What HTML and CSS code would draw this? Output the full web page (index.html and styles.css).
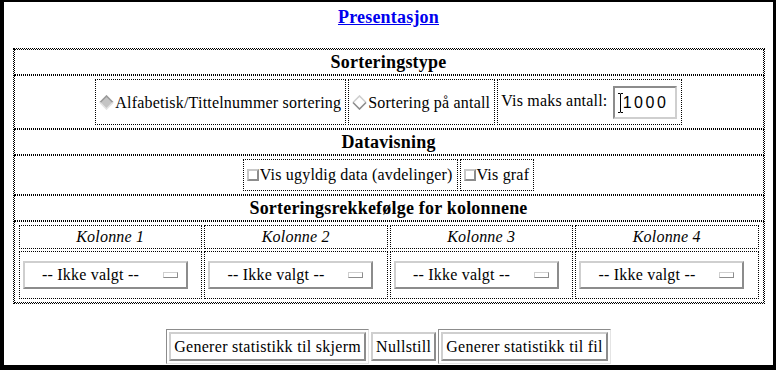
FILE: index.html
```html
<!DOCTYPE html>
<html lang="no">
<head>
  <meta charset="UTF-8">
  <title>Presentasjon</title>
  <link rel="stylesheet" href="styles.css">
</head>
<body>

  <div class="page">
    <h1 class="title"><a href="#">Presentasjon</a></h1>

    <table class="outer">
      <!-- SORTERINGSTYPE -->
      <tr><th>Sorteringstype</th></tr>
      <tr>
        <td>
          <table class="inner sort">
            <tr>
              <td>
                <svg class="radio" width="15" height="15" viewBox="0 0 15 15">
                  <polygon points="7.5,1 14,7.5 7.5,14 1,7.5" fill="#c4c4c4"/>
                  <polyline points="1,7.5 7.5,1 14,7.5" fill="none" stroke="#9a9a9a" stroke-width="1.6"/>
                  <polyline points="14,7.5 7.5,14 1,7.5" fill="none" stroke="#e2e2e2" stroke-width="1.6"/>
                </svg>Alfabetisk/Tittelnummer sortering
              </td>
              <td>
                <svg class="radio" width="15" height="15" viewBox="0 0 15 15">
                  <polygon points="7.5,1 14,7.5 7.5,14 1,7.5" fill="#fff"/>
                  <polyline points="1,7.5 7.5,1 14,7.5" fill="none" stroke="#cfcfcf" stroke-width="1.6"/>
                  <polyline points="14,7.5 7.5,14 1,7.5" fill="none" stroke="#8c8c8c" stroke-width="1.6"/>
                </svg>Sortering på antall
              </td>
              <td class="maks">
                Vis maks antall:
                <span class="num">
                  <svg class="caret" width="5" height="20" viewBox="0 0 5 20">
                    <path d="M0 0.5h2M3 0.5h2M2.5 0.5v19M0 19.5h2M3 19.5h2" stroke="#000" stroke-width="1" fill="none"/>
                  </svg>1000
                </span>
              </td>
            </tr>
          </table>
        </td>
      </tr>

      <!-- DATAVISNING -->
      <tr><th>Datavisning</th></tr>
      <tr>
        <td>
          <table class="inner data">
            <tr>
              <td><span class="check"></span>Vis ugyldig data (avdelinger)</td>
              <td><span class="check"></span>Vis graf</td>
            </tr>
          </table>
        </td>
      </tr>

      <!-- KOLONNER -->
      <tr><th>Sorteringsrekkefølge for kolonnene</th></tr>
      <tr>
        <td class="colrow">
          <table class="inner cols">
            <tr>
              <td class="colname">Kolonne 1</td>
              <td class="colname">Kolonne 2</td>
              <td class="colname">Kolonne 3</td>
              <td class="colname">Kolonne 4</td>
            </tr>
            <tr>
              <td class="colsel"><div class="select"><span class="label">-- Ikke valgt --</span><span class="indicator"></span></div></td>
              <td class="colsel"><div class="select"><span class="label">-- Ikke valgt --</span><span class="indicator"></span></div></td>
              <td class="colsel"><div class="select"><span class="label">-- Ikke valgt --</span><span class="indicator"></span></div></td>
              <td class="colsel"><div class="select"><span class="label">-- Ikke valgt --</span><span class="indicator"></span></div></td>
            </tr>
          </table>
        </td>
      </tr>
    </table>

    <div class="actions">
      <span class="default"><button>Generer statistikk til skjerm</button></span>
      <button>Nullstill</button>
      <span class="default"><button>Generer statistikk til fil</button></span>
    </div>
  </div>

</body>
</html>
```

FILE: styles.css
```css
html, body {
  background-color: #000;
  margin: 0;
}

body {
  font-family: "Liberation Serif", "Times New Roman", serif;
  font-size: 16px;
  letter-spacing: 0.2px;
}

.page {
  background-color: #fff;
  margin: 2px 3px 0 4px;
  height: 363px;
  overflow: hidden;
}

.title {
  margin: 0;
  padding-top: 5px;
  height: 41px;
  font-size: 18px;
  line-height: 21px;
  text-align: center;
  letter-spacing: 0.2px;
}

.title a {
  color: #0000ee;
}

/* tabeller */
table {
  border-collapse: separate;
}

.outer {
  width: 752px;
  margin: 0 auto;
  border: 1px dotted #000;
  border-spacing: 0;
}

.outer > tbody > tr > th,
.outer > tbody > tr > td {
  border: 1px dotted #000;
  padding: 1px;
}

.outer > tbody > tr > th {
  font-size: 18px;
  line-height: 20px;
  padding: 2px;
  letter-spacing: 0.2px;
}

.outer > tbody > tr > td.colrow {
  padding: 1px 2px;
}

.inner {
  margin: 0 auto;
  border-spacing: 2px;
}

.inner td {
  border: 1px dotted #000;
  white-space: nowrap;
  vertical-align: middle;
}

.sort td {
  padding: 6px 4px 5px 3px;
  height: 33px;
}

.data td {
  padding: 5px 4px 5px 3px;
  line-height: 20px;
}

.cols {
  width: 100%;
}

.colname {
  width: 25%;
  text-align: center;
  font-style: italic;
  line-height: 20px;
  padding: 1px;
}

.colsel {
  padding: 9px 3px;
}

/* kontroller */
.radio {
  vertical-align: -2px;
  margin-right: 1px;
}

.check {
  display: inline-block;
  width: 12px;
  height: 12px;
  box-sizing: border-box;
  border: 2px solid;
  border-color: #c8c8c8 #8c8c8c #8c8c8c #c8c8c8;
  background-color: #fff;
  vertical-align: -1px;
  margin-right: 1px;
}

.num {
  display: inline-flex;
  align-items: center;
  width: 64px;
  height: 33px;
  box-sizing: border-box;
  border: 2px solid;
  border-color: #8c8c8c #cfcfcf #cfcfcf #8c8c8c;
  padding-left: 3px;
  margin-left: 1px;
  vertical-align: middle;
  font-family: "Liberation Sans", Arial, sans-serif;
  font-size: 16px;
  letter-spacing: 2.5px;
}

.select {
  display: flex;
  align-items: center;
  width: 165px;
  height: 28px;
  box-sizing: border-box;
  border: 2px solid;
  border-color: #cfcfcf #8c8c8c #8c8c8c #cfcfcf;
}

.label {
  flex: 1;
  text-align: center;
}

.indicator {
  width: 15px;
  height: 6px;
  box-sizing: border-box;
  border: 1px solid;
  border-color: #cfcfcf #8c8c8c #8c8c8c #cfcfcf;
  margin: 0 8px 0 6px;
}

.actions {
  display: flex;
  justify-content: center;
  align-items: center;
  gap: 2px;
  margin-top: 25px;
}

.default {
  display: inline-block;
  border: 1px solid;
  border-color: #8c8c8c #e4e4e4 #e4e4e4 #8c8c8c;
  padding: 2px;
}

button {
  display: block;
  font-family: "Liberation Serif", "Times New Roman", serif;
  font-size: 16px;
  letter-spacing: 0.3px;
  line-height: 19px;
  background-color: #fff;
  color: #000;
  border: 2px solid;
  border-color: #cfcfcf #8c8c8c #8c8c8c #cfcfcf;
  padding: 3px 3px;
  margin: 0;
}
```
